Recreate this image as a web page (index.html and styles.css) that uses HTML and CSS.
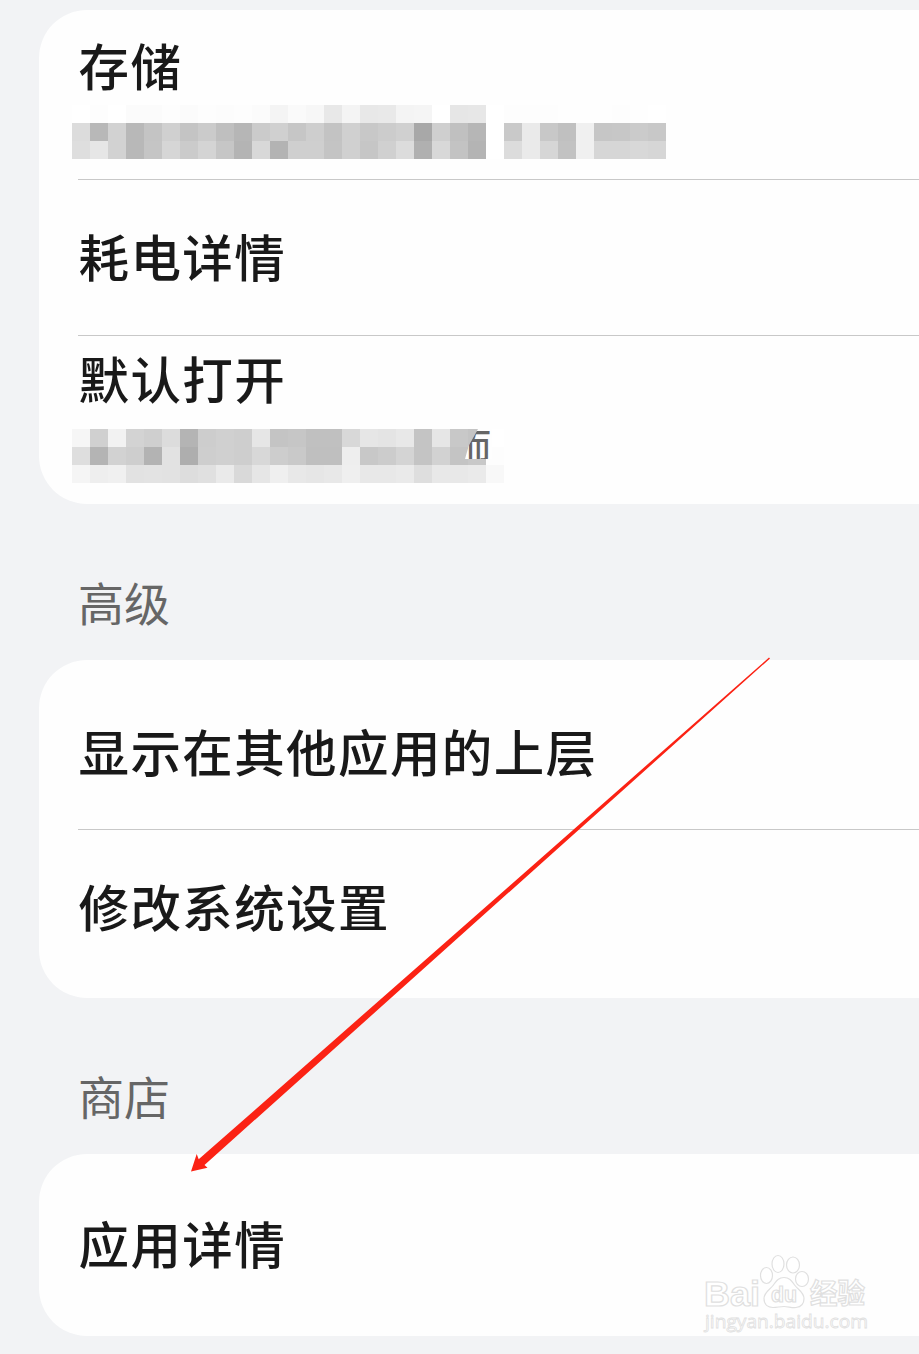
FILE: index.html
```
<!DOCTYPE html>
<html lang="zh-CN">
<head>
    <meta charset="UTF-8">
    <meta name="viewport" content="width=device-width, initial-scale=1.0">
    <title>应用信息</title>
    <link rel="stylesheet" href="styles.css">
</head>
<body>
    <div class="page">
        <div class="card">
            <div class="row storage">
                <div class="title">存储</div>
                <div class="mosaic" id="storage-mosaic"></div>
            </div>
            <div class="row">
                <div class="title">耗电详情</div>
            </div>
            <div class="row default-open">
                <div class="title">默认打开</div>
                <div class="mosaic" id="open-mosaic"></div>
                <span class="leftover">而</span>
            </div>
        </div>

        <h2 class="section">高级</h2>
        <div class="card">
            <div class="row overlay">
                <div class="title">显示在其他应用的上层</div>
            </div>
            <div class="row settings">
                <div class="title">修改系统设置</div>
            </div>
        </div>

        <h2 class="section">商店</h2>
        <div class="card">
            <div class="row detail">
                <div class="title">应用详情</div>
            </div>
        </div>

        <svg class="arrow" width="580" height="516" viewBox="190 657 580 516">
            <path d="M769 657.500L770 658.500L204.500 1165L207.500 1167.700L191 1171.500L196.700 1154L198.700 1159.300Z" fill="#fb2214"/>
        </svg>

        <svg class="watermark" width="180" height="84" viewBox="696 1250 180 84">
            <g fill="#fff" stroke="#e0e0e0" stroke-width="1.200">
                <ellipse cx="766.500" cy="1275.500" rx="6" ry="8"/>
                <ellipse cx="778" cy="1264" rx="6" ry="8.500"/>
                <ellipse cx="793" cy="1265" rx="6.500" ry="8"/>
                <ellipse cx="802" cy="1279" rx="6.500" ry="7.500"/>
                <path d="M784 1277.500c-6 0-8 4-11 8-3 4-9 7-9 13 0 6 4 9 9 9 4 0 7-1 11-1s8 1.500 12 1c5-.5 8-4 8-9 0-6-6-9-9-13-3-4-5-8-11-8z"/>
                <text class="wm-bai" x="704" y="1306" textLength="56" lengthAdjust="spacingAndGlyphs">Bai</text>
                <text class="wm-du" x="771" y="1302" textLength="26" lengthAdjust="spacingAndGlyphs">du</text>
                <text class="wm-cn" x="810" y="1304" textLength="55" lengthAdjust="spacingAndGlyphs">经验</text>
                <text class="wm-url" x="705" y="1328" textLength="163" lengthAdjust="spacingAndGlyphs">jingyan.baidu.com</text>
            </g>
        </svg>
    </div>

    <script>
        // gray level of each 18px block, row by row
        const storage = [
            'ff fd ff fb fb fd fb fd fc fd fb f4 fa f7 e8 f4 e8 e9 f4 f5 ff e6 e7 ff fd fd fd fe fe fe fd fe ff',
            'dc b8 d2 b8 c4 d0 c4 cb bf b6 cb d0 c6 ce c3 d0 c8 cc d0 a8 cf c0 b6 ff c9 ea c8 c0 f0 c6 c7 cb c8',
            'de e6 d2 b8 c5 d6 cb d4 c6 b4 d8 b3 cf cf c4 d0 c6 d0 dc b0 d8 c3 b4 ff dc ea d6 c2 f0 d6 d6 d8 d6'
        ];
        const defaultOpen = [
            'f6 d0 f2 d3 cf dc b4 cd d0 ce e6 c4 c6 c0 c0 d8 e6 e4 e8 c4 e6 c8 c4 ff',
            'de b4 d2 ce b3 e2 ae ce d0 ce d8 cd c9 bf bf ee c8 cc d4 c4 d2 c4 c8 fd',
            'f5 ee f0 e2 e3 e2 dd e0 ea d9 e6 ef e8 e6 e8 ef e8 e8 ea de e8 e8 ea f8'
        ];

        function drawMosaic(id, rows) {
            const box = document.getElementById(id);
            rows.forEach(row => {
                const line = document.createElement('div');
                line.className = 'mosaic-line';
                row.split(' ').forEach(level => {
                    const block = document.createElement('i');
                    block.style.background = '#' + level + level + level;
                    line.appendChild(block);
                });
                box.appendChild(line);
            });
        }

        drawMosaic('storage-mosaic', storage);
        drawMosaic('open-mosaic', defaultOpen);
    </script>
</body>
</html>
```

FILE: styles.css
```
* {
    box-sizing: border-box;
}
body {
    margin: 0;
    background: #f2f3f5;
    font-family: "Noto Sans CJK SC", sans-serif;
    color: #191919;
}
.page {
    position: relative;
    height: 1354px;
    padding: 10px 0 0 39px;
    overflow: hidden;
}
.card {
    background: #fefefe;
    border-radius: 48px 0 0 48px;
    padding-left: 39px;
}
.row {
    position: relative;
    height: 156px;
    display: flex;
    flex-direction: column;
    justify-content: center;
    border-bottom: 1px solid #c8c8c8;
}
.row:last-child {
    border-bottom: none;
}
.title {
    margin-bottom: 6px;
    padding-left: 0.5px;
    font-size: 50.5px;
    font-weight: 500;
    line-height: 58px;
    letter-spacing: 1.4px;
    white-space: nowrap;
}
.storage {
    height: 170px;
    justify-content: flex-start;
    padding-top: 25px;
}
.storage .mosaic {
    margin-top: 6px;
}
.default-open {
    height: 168px;
    justify-content: flex-start;
    padding-top: 12px;
}
.default-open .mosaic {
    margin-top: 17px;
}
.mosaic {
    margin-left: -6px;
}
.mosaic-line {
    display: flex;
}
.mosaic-line i {
    width: 18px;
    height: 18px;
}
/* bit of the subtitle that sticks out of the mosaic */
.leftover {
    position: absolute;
    left: 376px;
    top: 93px;
    width: 38px;
    height: 30px;
    padding-left: 4px;
    font-size: 33px;
    font-weight: 500;
    line-height: 30px;
    color: #666;
    background: #fefefe;
    clip-path: polygon(24px 0, 100% 0, 100% 100%, 11px 100%, 15px 16px);
}
.section {
    margin: 0;
    height: 156px;
    padding: 69px 0 0 39px;
    font-size: 46px;
    font-weight: 400;
    line-height: 56px;
    color: #666;
}
.overlay {
    height: 170px;
    padding-top: 16px;
}
.settings {
    height: 168px;
    padding-bottom: 12px;
}
.detail {
    height: 182px;
}
.arrow {
    position: absolute;
    left: 190px;
    top: 657px;
}
.watermark {
    position: absolute;
    left: 696px;
    top: 1250px;
}
.wm-bai,
.wm-du {
    font-family: "Liberation Sans", sans-serif;
    font-weight: bold;
}
.wm-bai {
    font-size: 35px;
}
.wm-du {
    font-size: 22px;
}
.wm-cn {
    font-size: 28px;
    font-weight: 700;
}
.wm-url {
    font-family: "Open Sans", sans-serif;
    font-size: 19px;
    stroke-width: 0.8;
}
```
